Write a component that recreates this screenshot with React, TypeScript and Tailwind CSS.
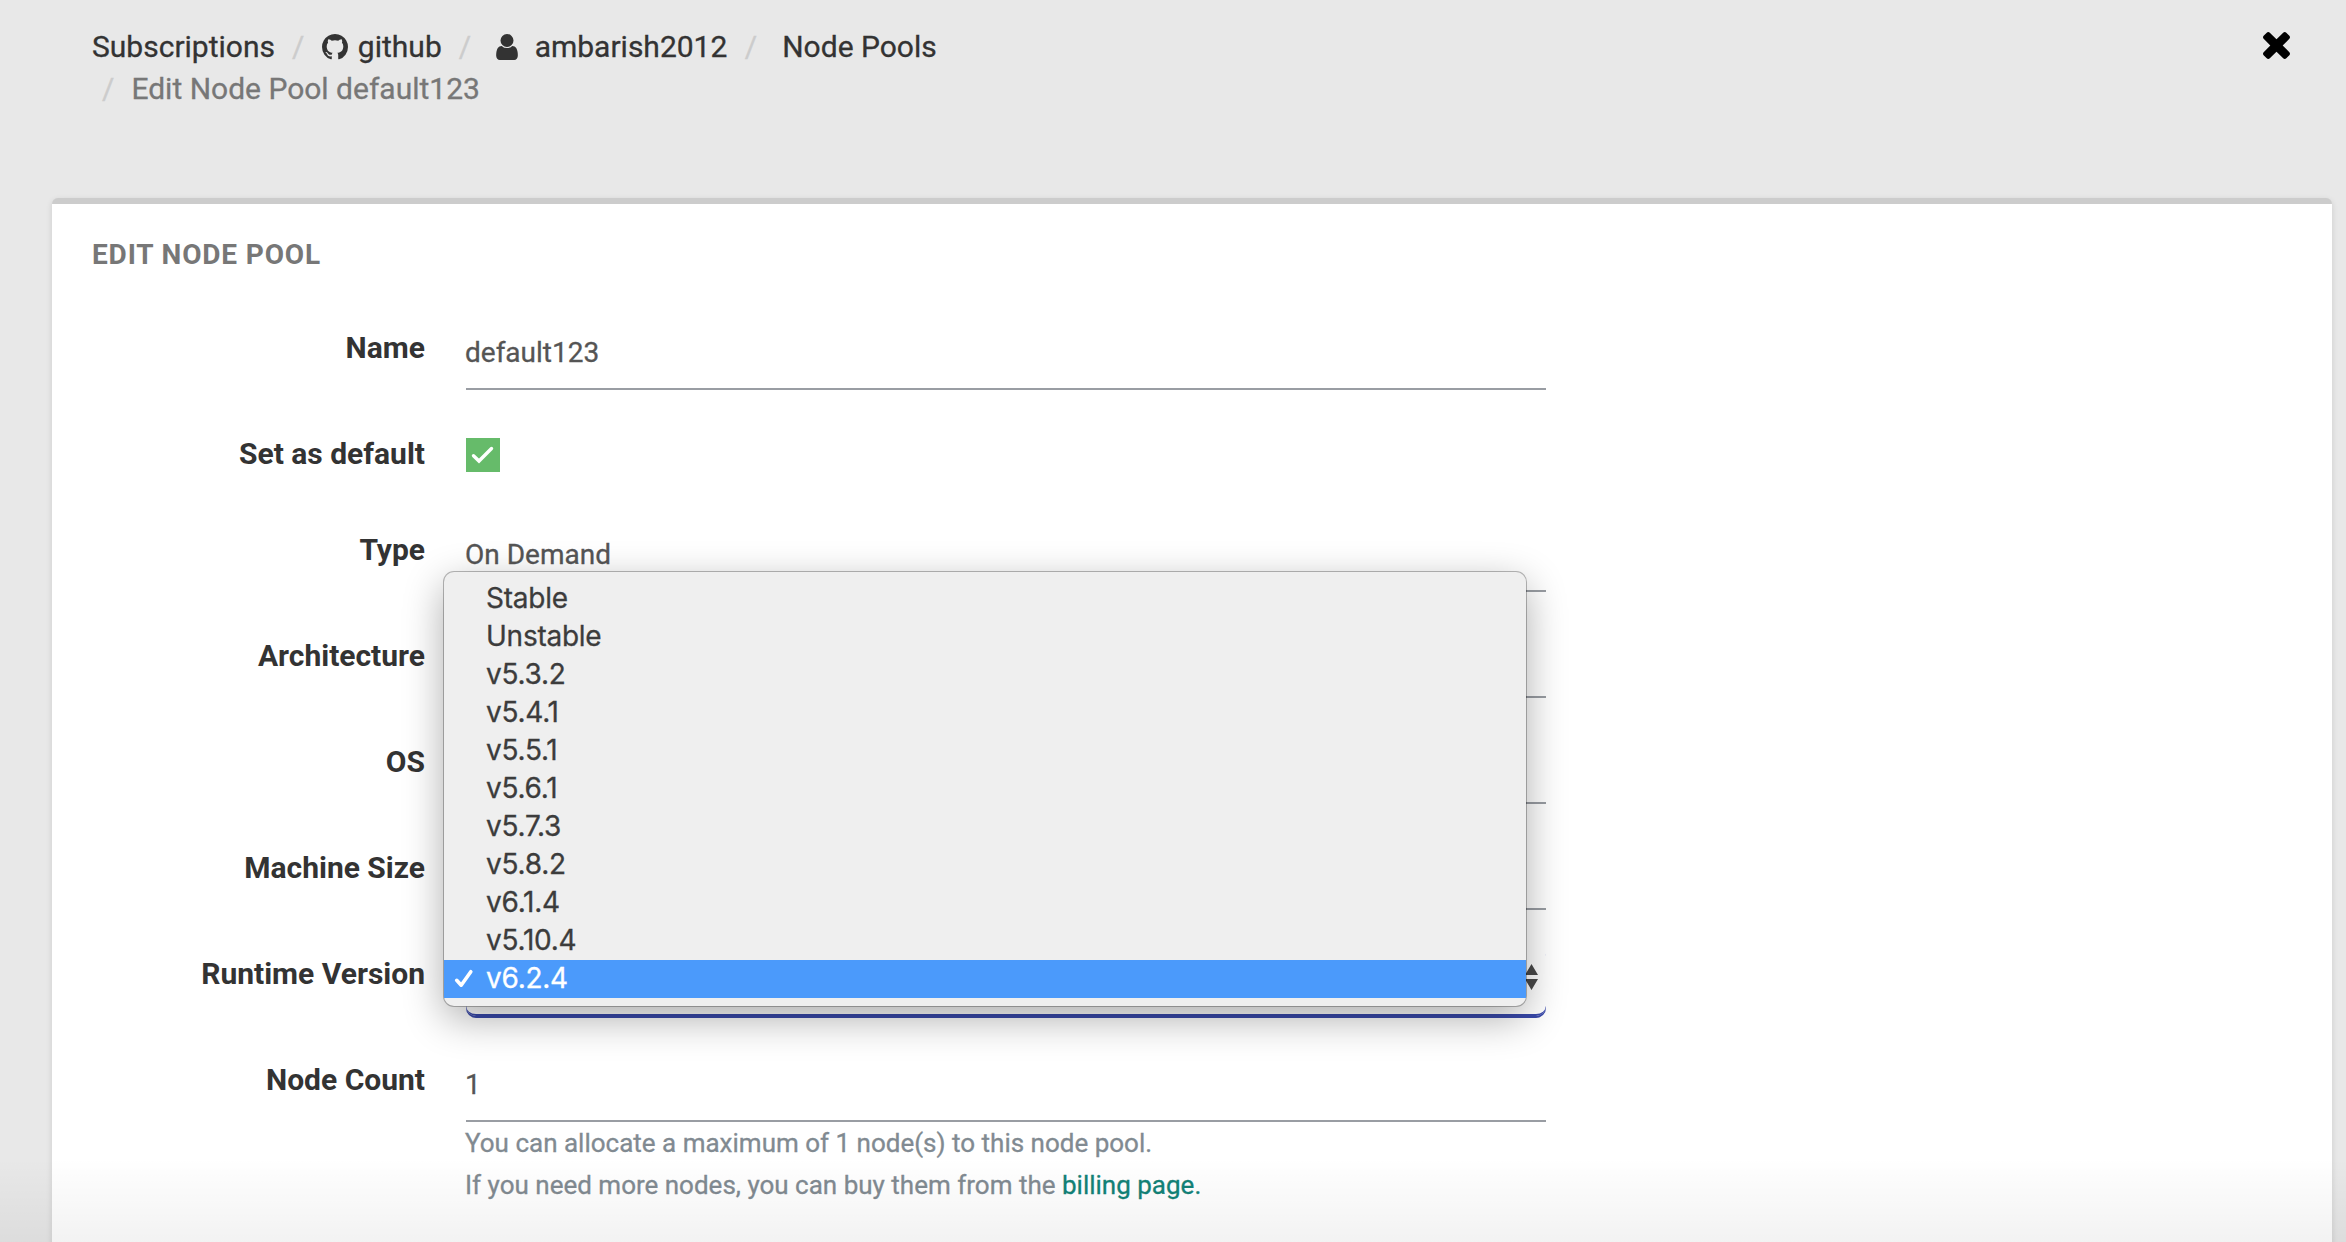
import React, { ReactNode } from "react";

const versions = ["Stable", "Unstable", "v5.3.2", "v5.4.1", "v5.5.1", "v5.6.1", "v5.7.3", "v5.8.2", "v6.1.4", "v5.10.4", "v6.2.4"];
const selected = "v6.2.4";

function GithubIcon() {
  return (
    <svg viewBox="128 128 1536 1536" className="h-[26px] w-[26px]" fill="currentColor">
      <path d="M896 128q209 0 385.500 103t279.500 279.500 103 385.500q0 251-146.500 451.500t-378.500 277.500q-27 5-40-7t-13-30q0-3 .5-76.500t.5-134.500q0-97-52-142 57-6 102.500-18t94-39 81-66.500 53-105 20.500-150.500q0-119-79-206 37-91-8-204-28-9-81 11t-92 44l-38 24q-93-26-192-26t-192 26q-16-11-42.500-27t-83.500-38.500-85-13.500q-45 113-8 204-79 87-79 206 0 85 20.500 150t52.500 105 80.500 67 94 39 102.500 18q-39 36-49 103-21 10-45 15t-57 5-65.500-21.500-55.500-62.500q-19-32-48.500-52t-49.500-24l-20-3q-21 0-29 4.500t-5 11.500 9 14 13 12l7 5q22 10 43.500 38t31.500 51l10 23q13 38 44 61.500t67 30 69.500 7 55.500-3.500l23-4q0 38 .5 88.500t.5 54.500q0 18-13 30t-40 7q-232-77-378.500-277.500t-146.500-451.500q0-209 103-385.500t279.500-279.500 385.500-103z" />
    </svg>
  );
}

function UserIcon() {
  return (
    <svg viewBox="256 128 1280 1536" className="h-[26px] w-[22px]" fill="currentColor">
      <path d="M1536 1399q0 109-62.500 187t-150.500 78h-854q-88 0-150.500-78t-62.500-187q0-85 8.500-160.500t31.500-152 58.500-131 94-89 134.500-34.500q131 128 313 128t313-128q76 0 134.500 34.500t94 89 58.500 131 31.500 152 8.500 160.500zm-256-887q0 159-112.500 271.500t-271.500 112.500-271.500-112.500-112.500-271.500 112.500-271.500 271.500-112.500 271.500 112.500 112.500 271.500z" />
    </svg>
  );
}

function CloseIcon() {
  return (
    <svg viewBox="302 302 1188 1188" className="h-[27px] w-[27px]" fill="#000">
      <path d="M1490 1322q0 40-28 68l-136 136q-28 28-68 28t-68-28l-294-294-294 294q-28 28-68 28t-68-28l-136-136q-28-28-28-68t28-68l294-294-294-294q-28-28-28-68t28-68l136-136q28-28 68-28t68 28l294 294 294-294q28-28 68-28t68 28l136 136q28 28 28 68t-28 68l-294 294 294 294q28 28 28 68z" transform="translate(0 -64)" />
    </svg>
  );
}

function Slash({ className }: { className: string }) {
  return <span className={`text-[#ccc] ${className}`}>/</span>;
}

function Row({ label, children, short }: { label: string; children?: ReactNode; short?: boolean }) {
  return (
    <div className={`flex ${short ? "h-[96px]" : "h-[106px]"}`}>
      <div className="w-[373px] pt-[7px] text-right text-[30px] font-bold leading-[42px] text-[#333]">{label}</div>
      <div className="ml-[41px] w-[1080px]">{children}</div>
    </div>
  );
}

function Field({ value }: { value?: string }) {
  return (
    <div className="h-[70px] border-b-2 border-[#999da3] pt-[13px] text-[28px] leading-[40px] text-[#555]">
      <span className="-ml-px [-webkit-text-stroke:0.3px]">{value}</span>
    </div>
  );
}

function VersionMenu() {
  return (
    <div className="absolute -left-[22px] -top-[374px] h-[434px] w-[1082px] rounded-[10px] bg-[#efefef] py-2 shadow-[0_0_0_1px_rgba(0,0,0,0.27),0_12px_40px_rgba(0,0,0,0.33)]">
      {versions.map((v) => (
        <div
          key={v}
          className={`flex h-[38px] font-[Inter,sans-serif] text-[28px] leading-[37px] tracking-[-0.25px] [-webkit-text-stroke:0.3px] ${
            v === selected ? "bg-[#4b9afb] text-white" : "text-[#3c3c3c]"
          }`}
        >
          <div className="w-[42px] pl-2.5 pt-2">
            {v === selected && (
              <svg viewBox="0 0 20 20" className="h-5 w-5" fill="none" stroke="#fff" strokeWidth="3.6" strokeLinecap="round" strokeLinejoin="round">
                <path d="M2.700 12.300L7.200 17.200L16.800 3.700" />
              </svg>
            )}
          </div>
          <span>{v}</span>
        </div>
      ))}
    </div>
  );
}

export default function App() {
  return (
    <div className="relative h-[1242px] w-[2346px] overflow-hidden bg-[#e8e8e8] font-[Roboto,sans-serif]">
      <header className="flex h-[198px] justify-between pl-[92px] pr-14 pt-[26px]">
        <nav className="text-[30px] leading-[42px] text-[#333] [-webkit-text-stroke:0.3px]">
          <div className="flex items-center">
            <span>Subscriptions</span>
            <Slash className="ml-[17px]" />
            <span className="ml-[17.5px]"><GithubIcon /></span>
            <span className="ml-[10px]">github</span>
            <Slash className="ml-[17px]" />
            <span className="ml-[24.500px]"><UserIcon /></span>
            <span className="ml-[17px]">ambarish2012</span>
            <Slash className="ml-[17.5px]" />
            <span className="ml-[25px]">Node Pools</span>
          </div>
          <div className="flex items-center">
            <Slash className="ml-[10px]" />
            <span className="ml-[17px] text-[#777]">Edit Node Pool default123</span>
          </div>
        </nav>
        <button className="mt-[6px] h-[27px]"><CloseIcon /></button>
      </header>

      <main className="ml-[52px] h-[1100px] w-[2280px] rounded-[6px] border-t-[6px] border-[#ccc] bg-white pt-[30px] shadow-[0_2px_6px_rgba(0,0,0,0.12)]">
        <h1 className="mb-[44px] pl-10 text-[28px] font-bold leading-[42px] tracking-[0.85px] text-[#777]">EDIT NODE POOL</h1>
        <Row label="Name"><Field value="default123" /></Row>
        <Row label="Set as default" short>
          <div className="mt-3 h-[34px] w-[34px] bg-[#66bb6a]">
            <svg viewBox="0 0 34 34" className="h-[34px] w-[34px]" fill="none" stroke="#fff" strokeWidth="3.4" strokeLinecap="round">
              <path d="M7.500 17.700L13 23L25.500 10.500" />
            </svg>
          </div>
        </Row>
        <Row label="Type"><Field value="On Demand" /></Row>
        <Row label="Architecture"><Field /></Row>
        <Row label="OS"><Field /></Row>
        <Row label="Machine Size"><Field /></Row>
        <Row label="Runtime Version">
          <div className="relative z-10">
            <div className="flex h-[70px] justify-end rounded-[10px] border-b-2 border-[#3949ab] pr-2 pt-[18px] shadow-[0_2px_0_#3949ab]">
              <svg viewBox="0 0 13 26" className="h-[26px] w-[13px]" fill="#4a4a4a">
                <path d="M6.500 0L13 11H0zM0 15H13L6.500 26z" />
              </svg>
            </div>
            <VersionMenu />
          </div>
        </Row>
        <Row label="Node Count">
          <Field value="1" />
          <p className="-ml-px text-[26px] leading-[42px] text-[#818a91] [-webkit-text-stroke:0.3px]">
            You can allocate a maximum of 1 node(s) to this node pool.
            <br />
            If you need more nodes, you can buy them from the <a className="text-[#128277]">billing page.</a>
          </p>
        </Row>
      </main>
      <div className="absolute inset-x-0 bottom-0 h-[84px] bg-linear-to-b from-black/0 to-black/5" />
    </div>
  );
}
